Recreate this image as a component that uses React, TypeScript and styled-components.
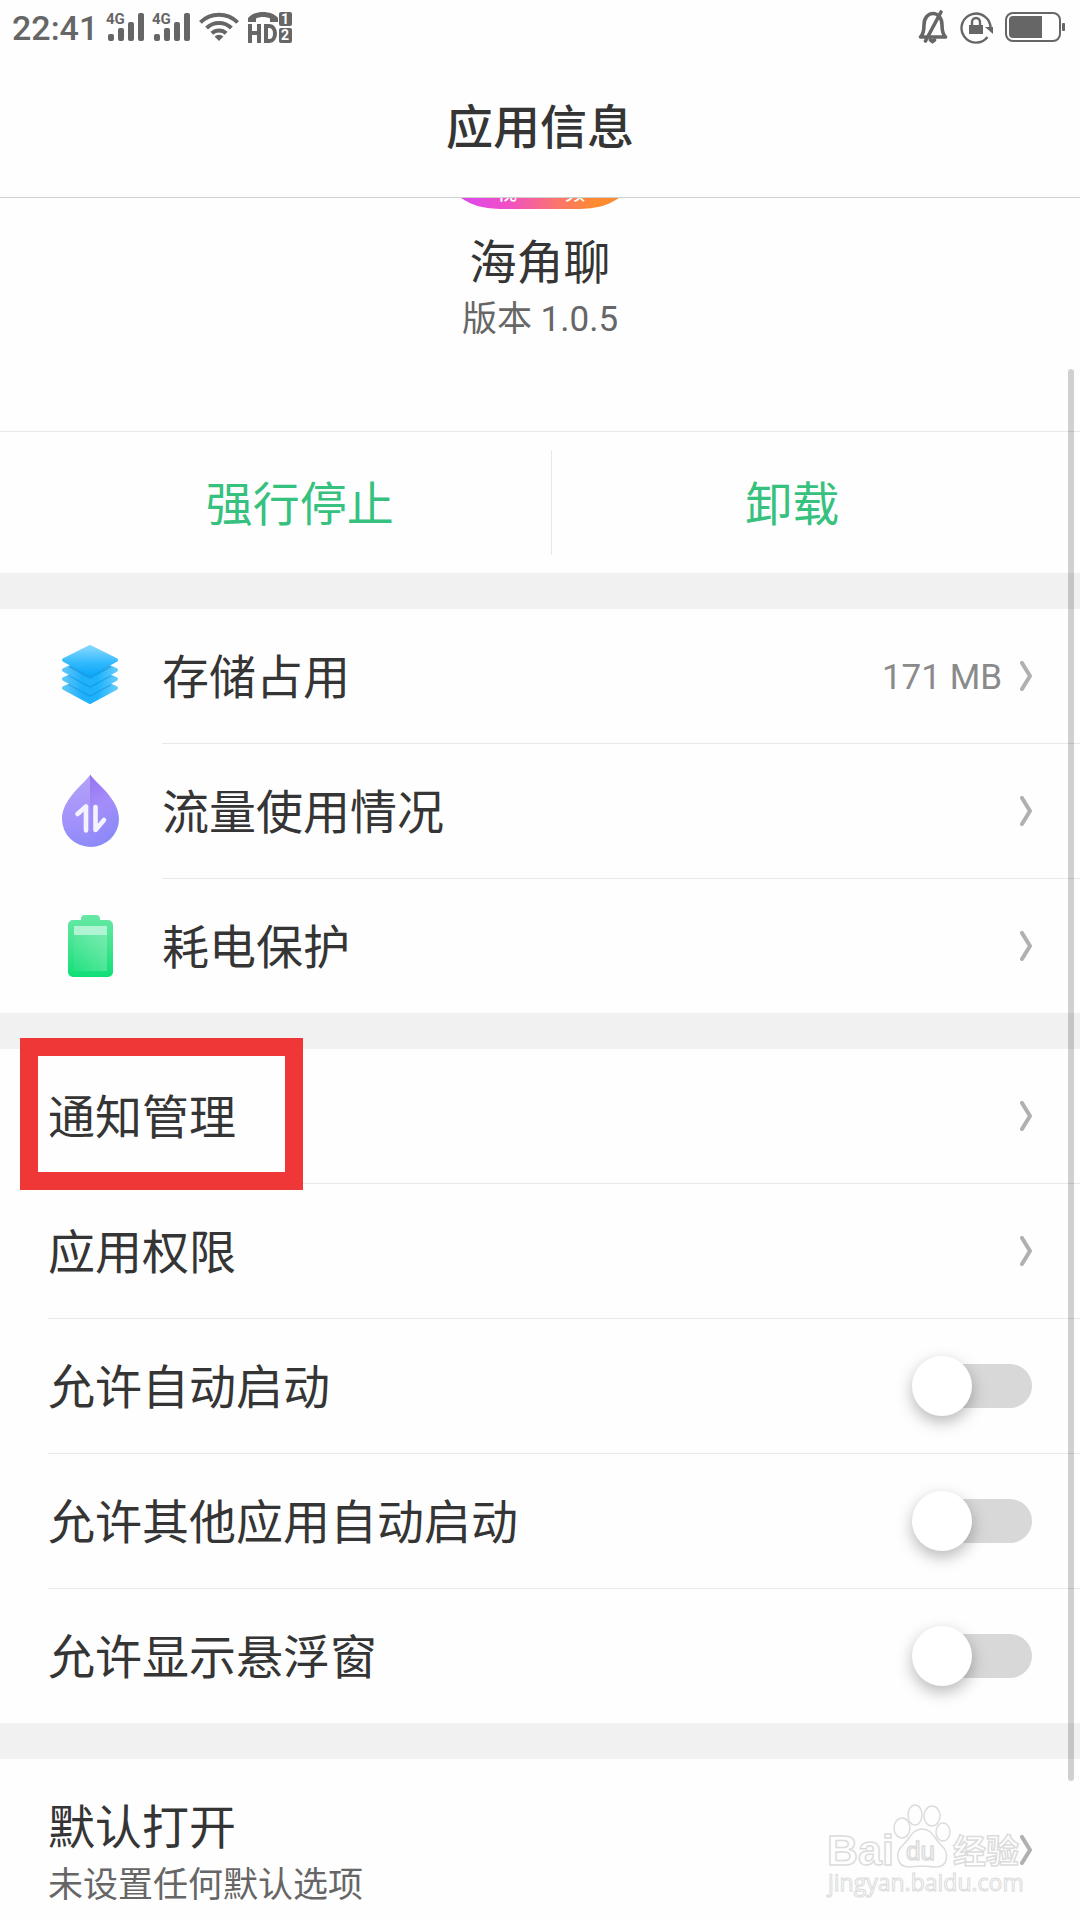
import React from "react";
import styled, { createGlobalStyle } from "styled-components";

const fontStack = `Roboto, "Noto Sans CJK SC", sans-serif`;
const ink = "#353535";
const muted = "#666666";
const hairline = "#e8e8e8";

const GlobalStyle = createGlobalStyle`
  * { box-sizing: border-box; }
  body { margin: 0; background: #fefefe; font-family: ${fontStack}; color: ${ink}; }
  button, input { font: inherit; color: inherit; margin: 0; }
`;

const Screen = styled.div`
  position: relative;
  display: flex;
  flex-direction: column;
  height: 100vh;
  overflow: hidden;
  background: #fefefe;
`;

const StatusBar = styled.div`
  display: flex;
  justify-content: space-between;
  align-items: center;
  height: 54px;
  padding: 0 14px 0 12px;
  color: ${muted};
`;

const StatusGroup = styled.div<{ $gap: number }>`
  display: flex;
  align-items: center;
  gap: ${(p) => p.$gap}px;
  svg { display: block; }
`;

const Clock = styled.time`
  padding-top: 2px;
  font-size: 34px;
  line-height: 52px;
  font-weight: 500;
`;

const TitleBar = styled.header`
  display: flex;
  align-items: center;
  justify-content: center;
  height: 144px;
  padding-top: 4px;
  border-bottom: 1px solid #cfcfcf;
`;

const Title = styled.h1`
  margin: 0;
  font-size: 47px;
  line-height: 64px;
  font-weight: 500;
`;

const Content = styled.main`
  flex: 1;
  min-height: 0;
  overflow: hidden;
`;

const Hero = styled.section`
  display: flex;
  flex-direction: column;
  align-items: center;
  height: 234px;
  border-bottom: 1px solid ${hairline};
  svg { display: block; }
`;

const AppName = styled.h2`
  margin: 22px 0 0;
  font-size: 47px;
  line-height: 64px;
  font-weight: 400;
`;

const Version = styled.p`
  margin: 0;
  font-size: 35px;
  line-height: 50px;
  color: ${muted};
`;

const Actions = styled.div`
  display: flex;
  height: 141px;
  padding: 18px 48px;
`;

const ActionButton = styled.button<{ $grow: number }>`
  flex: ${(p) => p.$grow} 1 0;
  border: 0;
  padding: 4px 0 0;
  background: none;
  color: #36c17e;
  font-size: 47px;
  line-height: 64px;
  & + & { border-left: 1px solid ${hairline}; }
`;

const Group = styled.section`
  border-top: 36px solid #f1f1f1;
`;

const RowLine = styled.div<{ $inset: number }>`
  height: 1px;
  margin-left: ${(p) => p.$inset}px;
  background: ${hairline};
`;

const RowBox = styled.div<{ $tall?: boolean }>`
  position: relative;
  display: flex;
  align-items: center;
  width: 100%;
  height: ${(p) => (p.$tall ? 182 : 134)}px;
  padding: 0 48px;
  border: 0;
  background: none;
  text-align: left;
  svg { display: block; flex: none; }
`;

const RowIcon = styled.span`
  width: 84px;
  margin-right: 30px;
`;

const RowText = styled.span<{ $tall?: boolean }>`
  display: flex;
  flex: 1;
  flex-direction: column;
  padding-top: ${(p) => (p.$tall ? 8 : 4)}px;
  font-size: 47px;
  line-height: 64px;
`;

const RowNote = styled.span`
  font-size: 35px;
  line-height: 52px;
  color: ${muted};
`;

const RowValue = styled.span`
  padding-top: 4px;
  margin-right: 18px;
  font-size: 35px;
  line-height: 50px;
  color: #8a8a8a;
`;

const Switch = styled.input`
  appearance: none;
  position: relative;
  width: 120px;
  height: 60px;
  &::before {
    content: "";
    position: absolute;
    inset: 8px 0 8px 4px;
    border-radius: 22px;
    background: #d8d8d8;
  }
  &::after {
    content: "";
    position: absolute;
    top: 0;
    left: 0;
    width: 60px;
    height: 60px;
    border-radius: 50%;
    background: #ffffff;
    box-shadow: 0 6px 16px rgba(0, 0, 0, 0.28);
  }
  &:checked::before { background: #36c17e; }
  &:checked::after { left: 60px; }
`;

const Highlight = styled.span`
  position: absolute;
  z-index: 1;
  top: -11px;
  left: 20px;
  width: 283px;
  height: 152px;
  border: 18px solid #ef3737;
  pointer-events: none;
`;

const ScrollThumb = styled.div`
  position: absolute;
  top: 369px;
  right: 6px;
  bottom: 139px;
  width: 6px;
  border-radius: 3px;
  background: rgba(0, 0, 0, 0.18);
`;

const Watermark = styled.svg`
  position: absolute;
  right: 52px;
  bottom: 16px;
`;

const Signal = () => (
  <svg width="39" height="36" viewBox="0 -3 39 36" fill="currentColor" aria-hidden="true">
    <text x="0" y="12" fontFamily="Roboto, sans-serif" fontSize="15" fontWeight="700">4G</text>
    <rect x="2" y="22" width="6" height="7" rx="2" />
    <rect x="12" y="16" width="6" height="13" rx="2" />
    <rect x="22" y="10" width="6" height="19" rx="2" />
    <rect x="32" y="1" width="6" height="28" rx="2" />
  </svg>
);

const Wifi = () => (
  <svg width="40" height="30" viewBox="0 0 40 30" fill="none" stroke="currentColor" strokeWidth="4" aria-hidden="true">
    <path d="M1.4 10.4a26.500 26.500 0 0 1 37.200 0" />
    <path d="M7.600 16a17.800 17.800 0 0 1 24.800 0" />
    <path d="M12.800 21.200a10.600 10.600 0 0 1 14.400 0" />
    <path d="M20 29l-4.400-4.400a6 6 0 0 1 8.800 0z" fill="currentColor" stroke="none" />
  </svg>
);

const HdCall = () => (
  <svg width="46" height="32" viewBox="0 0 46 32" aria-hidden="true">
    <path d="M1 11V7C7-1 25-1 31 7v4h-8V7.500C19 5.500 13 5.500 9 7.500V11z" fill="currentColor" />
    <path d="M3 13v19M12 13v19M3 22h9M19 15v15h3c8 0 8-15 0-15z" fill="none" stroke="currentColor" strokeWidth="4" />
    <rect x="32" y="1" width="13" height="14" rx="2" fill="currentColor" />
    <rect x="32" y="17" width="13" height="15" rx="2" fill="currentColor" />
    <g fill="#fefefe" fontFamily="Roboto, sans-serif" fontSize="14" fontWeight="700" textAnchor="middle">
      <text x="38" y="13">1</text>
      <text x="38" y="29">2</text>
    </g>
  </svg>
);

const BellOff = () => (
  <svg width="30" height="34" viewBox="0 0 30 34" fill="none" stroke="currentColor" aria-hidden="true">
    <path d="M2.500 27c3-3 3.500-7 3.500-12 0-7 4-11.500 9-11.500s9 4.500 9 11.500c0 5 .5 9 3.500 12z" strokeWidth="3.600" strokeLinejoin="round" />
    <path d="M12.500 30l2 1.500 2-1.500M23 2L7.500 31" strokeWidth="3.600" strokeLinecap="round" />
  </svg>
);

const RotationLock = () => (
  <svg width="33" height="33" viewBox="0 0 33 33" fill="none" stroke="currentColor" aria-hidden="true">
    <path d="M30.500 18A14.500 14.500 0 1 0 27.500 26" strokeWidth="2.400" />
    <path d="M25 16h8v7z" fill="currentColor" stroke="none" />
    <rect x="9" y="14" width="14" height="9" fill="currentColor" stroke="none" />
    <path d="M12 15v-4a4 4 0 0 1 8 0v4" strokeWidth="2.400" />
  </svg>
);

const Battery = () => (
  <svg width="61" height="32" viewBox="0 0 61 32" aria-hidden="true">
    <rect x="1" y="2" width="54" height="28" rx="7" fill="none" stroke="currentColor" strokeWidth="2" />
    <path d="M8 5h29v22H8a4 4 0 0 1-4-4V9a4 4 0 0 1 4-4z" fill="currentColor" />
    <rect x="57" y="12" width="3" height="8" rx="1" fill="currentColor" />
  </svg>
);

const AppBadge = () => (
  <svg width="160" height="11" viewBox="0 0 160 11" aria-hidden="true">
    <defs>
      <linearGradient id="badge" x1="0" x2="1">
        <stop offset="0.050" stopColor="#e048e6" />
        <stop offset="0.300" stopColor="#f050c4" />
        <stop offset="0.600" stopColor="#fb7470" />
        <stop offset="0.850" stopColor="#ff8b30" />
      </linearGradient>
    </defs>
    <path d="M1 0h158C148 7 138 11 116 11H44C22 11 12 7 1 0z" fill="url(#badge)" />
    <g fill="#ffffff" fontFamily="Noto Sans CJK SC, sans-serif" fontSize="20" fontWeight="500">
      <text x="37" y="2">视</text>
      <text x="105" y="2">频</text>
    </g>
  </svg>
);

const Layers = () => (
  <svg width="84" height="84" viewBox="0 0 84 84" strokeLinejoin="round" strokeWidth="4" aria-hidden="true">
    <defs>
      <linearGradient id="sheet" x1="0" x2="0" y1="0" y2="1">
        <stop offset="0" stopColor="#82d6fd" />
        <stop offset="0.600" stopColor="#30b9fd" />
        <stop offset="1" stopColor="#10aafa" />
      </linearGradient>
      <linearGradient id="under" x1="0" x2="1">
        <stop offset="0" stopColor="#5cc6f8" />
        <stop offset="0.350" stopColor="#1fb0fa" />
        <stop offset="0.650" stopColor="#1fb3fc" />
        <stop offset="1" stopColor="#5fcafa" />
      </linearGradient>
    </defs>
    {[54, 45, 36].map((y) => (
      <g key={y}>
        <path d={`M42 ${y - 12}L68 ${y}L42 ${y + 14}L16 ${y}z`} fill="url(#under)" stroke="url(#under)" />
        <path d={`M22 ${y - 5}L42 ${y + 6}L62 ${y - 5}`} fill="none" stroke="#0a86d4" strokeWidth="5" opacity="0.450" />
      </g>
    ))}
    <path d="M42 13L68 26L42 40L16 26z" fill="url(#sheet)" stroke="url(#sheet)" />
  </svg>
);

const Drop = () => (
  <svg width="84" height="84" viewBox="0 0 84 84" aria-hidden="true">
    <defs>
      <linearGradient id="dropLeft" x1="0" x2="0" y1="0" y2="1">
        <stop offset="0" stopColor="#b3a2f8" />
        <stop offset="0.650" stopColor="#a391fb" />
        <stop offset="1" stopColor="#8d8bf8" />
      </linearGradient>
      <linearGradient id="dropRight" x1="0" x2="0.300" y1="0" y2="1">
        <stop offset="0" stopColor="#9673ef" />
        <stop offset="0.500" stopColor="#a48dfa" />
        <stop offset="1" stopColor="#8b8af8" />
      </linearGradient>
    </defs>
    <path d="M42.400 5.500C36 15 14 30 14 50A28.400 28 0 0 0 42.400 78z" fill="url(#dropLeft)" />
    <path d="M42 5.500C49 15 71 30 71 50A28.400 28 0 0 1 42 78z" fill="url(#dropRight)" />
    <path d="M29.500 45l8.500-7.500V61.500M47.500 38v23l8.500-10" fill="none" stroke="#f3f3ff" strokeWidth="4.600" strokeLinecap="round" strokeLinejoin="round" />
  </svg>
);

const Power = () => (
  <svg width="84" height="84" viewBox="0 0 84 84" aria-hidden="true">
    <defs>
      <linearGradient id="cell" x1="0" x2="0" y1="0" y2="1">
        <stop offset="0" stopColor="#66e8a5" />
        <stop offset="0.500" stopColor="#42e48f" />
        <stop offset="1" stopColor="#0fdf77" />
      </linearGradient>
      <linearGradient id="glow" x1="0" x2="1">
        <stop offset="0" stopColor="#ffffff" stopOpacity="0.050" />
        <stop offset="1" stopColor="#ffffff" stopOpacity="0.220" />
      </linearGradient>
    </defs>
    <path d="M33 16v-1a4 4 0 0 1 4-4h11a4 4 0 0 1 4 4v1h8a5 5 0 0 1 5 5v47a5 5 0 0 1-5 5H25a5 5 0 0 1-5-5V21a5 5 0 0 1 5-5z" fill="url(#cell)" />
    <rect x="26" y="22" width="33" height="45" fill="url(#glow)" />
    <rect x="26" y="22" width="33" height="9" fill="#b1f4d3" />
  </svg>
);

const Chevron = () => (
  <svg width="12" height="30" viewBox="0 0 12 30" fill="none" aria-hidden="true">
    <path d="M2 2L10 15L2 28" stroke="#b0b0b0" strokeWidth="4" strokeLinecap="round" strokeLinejoin="round" />
  </svg>
);

interface LinkRowProps {
  label: string;
  note?: string;
  value?: string;
  icon?: React.ReactNode;
  highlighted?: boolean;
}

const LinkRow = ({ label, note, value, icon, highlighted }: LinkRowProps) => (
  <RowBox as="button" $tall={Boolean(note)}>
    {icon && <RowIcon>{icon}</RowIcon>}
    <RowText $tall={Boolean(note)}>
      {label}
      {note && <RowNote>{note}</RowNote>}
    </RowText>
    {value && <RowValue>{value}</RowValue>}
    <Chevron />
    {highlighted && <Highlight />}
  </RowBox>
);

const SwitchRow = ({ label }: { label: string }) => (
  <RowBox as="label">
    <RowText>{label}</RowText>
    <Switch type="checkbox" role="switch" />
  </RowBox>
);

export default function App() {
  return (
    <>
      <GlobalStyle />
      <Screen>
        <StatusBar>
          <StatusGroup $gap={8}>
            <Clock>22:41</Clock>
            <StatusGroup $gap={7}>
              <Signal />
              <Signal />
            </StatusGroup>
            <Wifi />
            <HdCall />
          </StatusGroup>
          <StatusGroup $gap={12}>
            <BellOff />
            <RotationLock />
            <Battery />
          </StatusGroup>
        </StatusBar>
        <TitleBar>
          <Title>应用信息</Title>
        </TitleBar>
        <Content>
          <Hero>
            <AppBadge />
            <AppName>海角聊</AppName>
            <Version>版本 1.0.5</Version>
          </Hero>
          <Actions>
            <ActionButton $grow={21}>强行停止</ActionButton>
            <ActionButton $grow={20}>卸载</ActionButton>
          </Actions>
          <Group>
            <LinkRow label="存储占用" value="171 MB" icon={<Layers />} />
            <RowLine $inset={162} />
            <LinkRow label="流量使用情况" icon={<Drop />} />
            <RowLine $inset={162} />
            <LinkRow label="耗电保护" icon={<Power />} />
          </Group>
          <Group>
            <LinkRow label="通知管理" highlighted />
            <RowLine $inset={48} />
            <LinkRow label="应用权限" />
            <RowLine $inset={48} />
            <SwitchRow label="允许自动启动" />
            <RowLine $inset={48} />
            <SwitchRow label="允许其他应用自动启动" />
            <RowLine $inset={48} />
            <SwitchRow label="允许显示悬浮窗" />
          </Group>
          <Group>
            <LinkRow label="默认打开" note="未设置任何默认选项" />
          </Group>
        </Content>
        <ScrollThumb />
        <Watermark width="204" height="104" viewBox="0 0 204 104" fill="#fefefe" stroke="#dcdcdc" strokeWidth="1.500">
          <g fontFamily="Liberation Sans, Noto Sans CJK SC, sans-serif" fontWeight="700">
            <text x="3" y="65" fontSize="43">Bai</text>
            <text x="129" y="63" fontSize="33">经验</text>
          </g>
          <ellipse cx="78" cy="28" rx="8" ry="10" />
          <ellipse cx="91" cy="15" rx="7" ry="10" />
          <ellipse cx="108" cy="16" rx="8" ry="10" />
          <ellipse cx="119" cy="32" rx="7" ry="9" />
          <path d="M98 29c10 0 12 9 19 16 9 8 7 22-5 22-6 0-8-1-14-1s-8 1-13 1c-12 0-15-14-6-22 7-6 9-16 19-16z" />
          <text x="82" y="60" fontFamily="Liberation Sans, sans-serif" fontSize="26">du</text>
          <text x="4" y="91" fontFamily="Open Sans, sans-serif" fontSize="23" strokeWidth="1">jingyan.baidu.com</text>
        </Watermark>
      </Screen>
    </>
  );
}
